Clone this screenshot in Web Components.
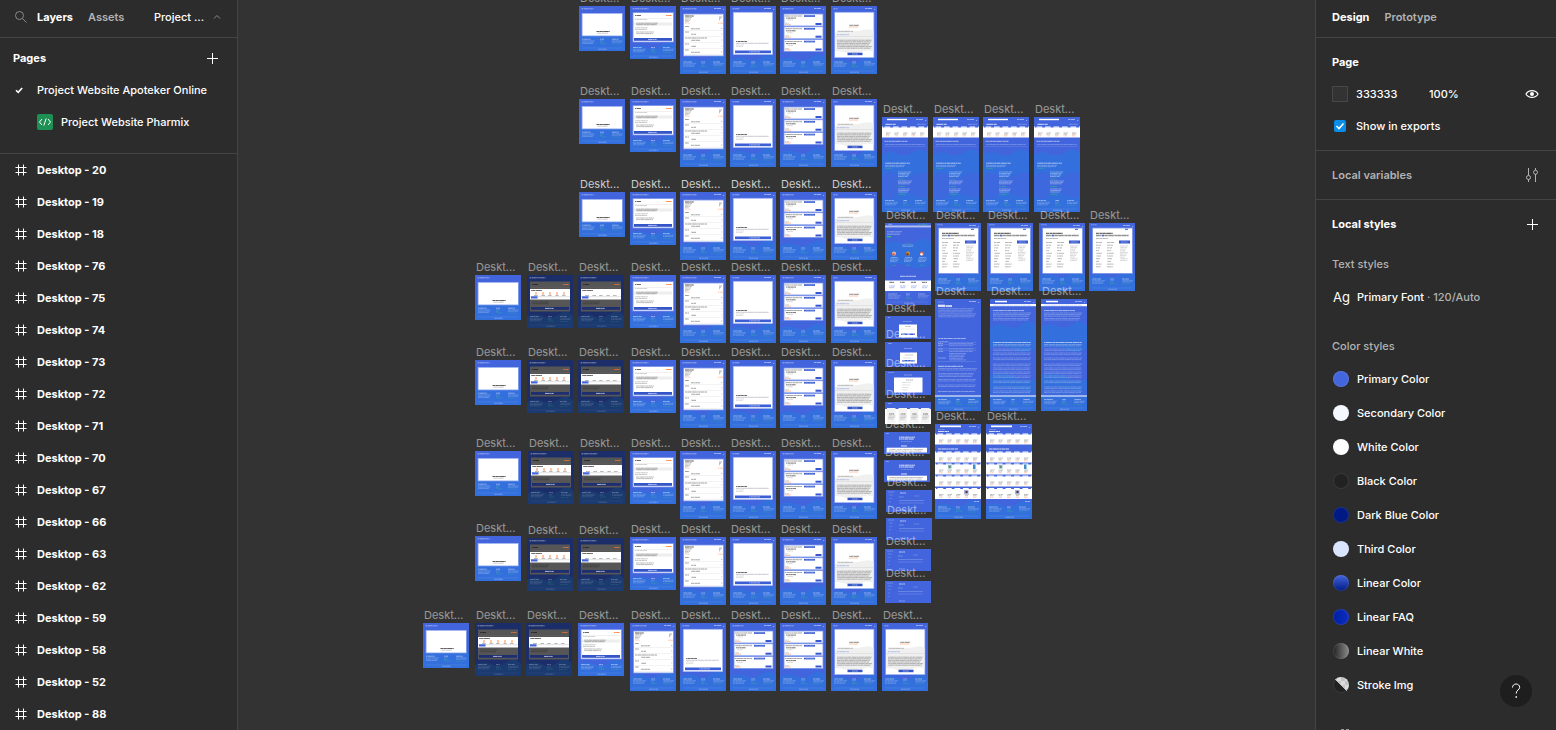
<!DOCTYPE html>
<html lang="en">
<head>
<meta charset="utf-8">
<title>Project Website Apoteker Online</title>
<style>
  html, body { margin: 0; height: 100%; background: #333; overflow: hidden; }
  body { font: 500 11px/16px Inter, "Liberation Sans", sans-serif; color: #fff; }
</style>
</head>
<body>
<design-editor></design-editor>
<script>
const BASE = `<style>
  *, ::before, ::after { box-sizing: border-box; }
  button, input { font: inherit; color: inherit; background: none; border: 0; padding: 0; margin: 0; text-align: left; }
  svg { display: block; }
  h2, h3 { font: inherit; margin: 0; }
</style>`;

const define = (name, html) => customElements.define(name, class extends HTMLElement {
  connectedCallback() {
    if (this.shadowRoot) return;
    const root = this.attachShadow({ mode: 'open' });
    root.innerHTML = BASE + (typeof html === 'function' ? html(this) : html);
  }
});

/* ---------- icons ---------- */
const ICONS = {
  search: [12, '<circle cx="4.500" cy="4.500" r="4" /><path d="M7.500 7.500l4 4"/>'],
  up: [8, '<path d="M1 5.500l3-3 3 3"/>'],
  plus: [11, '<path d="M5.500 0v11M0 5.500h11"/>'],
  tick: [8, '<path d="M1 4.200l2.200 2.200L7.200 2" stroke-width="1.600"/>'],
  frame: [12, '<path d="M3.500 .5v11M8.500 .5v11M.5 3.500h11M.5 8.500h11"/>'],
  code: [16, '<rect width="16" height="16" rx="2" fill="#1d9153" stroke="none"/><path d="M5 5L2.500 8 5 11M11 5l2.500 3L11 11M9.200 4.500L6.800 11.500"/>'],
  eye: [14, '<path d="M1 7c2.600-4.600 9.400-4.600 12 0-2.600 4.600-9.400 4.600-12 0z" stroke-width="1.200"/><circle cx="7" cy="7" r="2" fill="currentColor" stroke="none"/>'],
  sliders: [14, '<path d="M3.500 0v7.500M3.500 11.500v2.500M10.500 0v2M10.500 6v8"/><circle cx="3.500" cy="9.500" r="2"/><circle cx="10.500" cy="4.300" r="2"/>'],
  grid: [16, '<path d="M3 2.500h3M8 2.500h3M3 6h3M8 6h3" stroke-width="2"/>'],
  help: [16, '<path d="M4.500 4.500C4.500 2.500 6 1 8 1s3.700 1.400 3.700 3.300C11.700 7 8.200 6.800 8.200 10.500"/><path d="M7.500 14h1.500" stroke-width="1.500"/>']
};
define('ui-icon', el => {
  const [size, art] = ICONS[el.getAttribute('name')];
  return `<style>:host { display: block; flex: none; }</style>
  <svg width="${size}" height="${size}" viewBox="0 0 ${size} ${size}" fill="none" stroke="currentColor" aria-hidden="true">${art}</svg>`;
});

/* ---------- left panel ---------- */
define('page-item', el => `<style>
  :host { display: block; }
  button { display: flex; align-items: center; width: 100%; height: 32px; padding-left: 13px; }
  .mark { width: 24px; flex: none; }
  ui-icon[name=tick] { margin-left: 2px; }
  ui-icon[name=code] { margin-right: 8px; }
  </style>
  <button type="button"><span class="mark">${el.hasAttribute('current') ? '<ui-icon name="tick"></ui-icon>' : ''}</span>${el.hasAttribute('ready') ? '<ui-icon name="code"></ui-icon>' : ''}<slot></slot></button>`);

define('layer-item', `<style>
  :host { display: block; }
  button { display: flex; align-items: center; gap: 10px; width: 100%; height: 32px; padding-left: 15px; font-weight: 700; }
  </style><button type="button"><ui-icon name="frame"></ui-icon><span><slot></slot></span></button>`);

const LAYERS = [20, 19, 18, 76, 75, 74, 73, 72, 71, 70, 67, 66, 63, 62, 59, 58, 52, 88];
define('layers-panel', `<style>
  :host { display: block; background: #2c2c2c; border-right: 1px solid #444; overflow: hidden; }
  header { display: flex; align-items: center; height: 38px; padding: 0 16px 3px 15px; border-bottom: 1px solid #444; }
  header .search { margin-right: 10px; color: #8a8a8a; }
  header .tab { margin-right: 15px; font-weight: 700; }
  header .off { color: #b3b3b3; font-weight: 600; }
  header .menu { display: flex; align-items: center; gap: 9px; margin-left: auto; }
  header .menu ui-icon { color: #8a8a8a; }
  .pages { padding-bottom: 15px; border-bottom: 1px solid #444; }
  .title { display: flex; align-items: center; justify-content: space-between; height: 36px; padding: 4px 19px 0 13px; font-weight: 700; }
  </style>
  <header>
    <button type="button" class="search" aria-label="Search"><ui-icon name="search"></ui-icon></button>
    <button type="button" class="tab">Layers</button>
    <button type="button" class="tab off">Assets</button>
    <button type="button" class="menu">Project ...<ui-icon name="up"></ui-icon></button>
  </header>
  <section class="pages">
    <div class="title"><h2>Pages</h2><button type="button" aria-label="Add page"><ui-icon name="plus"></ui-icon></button></div>
    <page-item current>Project Website Apoteker Online</page-item>
    <page-item ready>Project Website Pharmix</page-item>
  </section>
  <nav>${LAYERS.map(n => `<layer-item>Desktop - ${n}</layer-item>`).join('')}</nav>`);

/* ---------- right panel ---------- */
define('style-item', el => `<style>
  :host { display: block; }
  button { display: flex; align-items: center; gap: 8px; height: 34px; width: 100%; padding-left: 17px; }
  i { width: 16px; height: 16px; border-radius: 50%; border: 1px solid rgba(255,255,255,.1); background: ${el.getAttribute('paint')}; background-origin: border-box; }
  </style><button type="button"><i></i><span><slot></slot></span></button>`);

const STYLES = [
  ['Primary Color', '#4466dd'],
  ['Secondary Color', '#f5f9ff'],
  ['White Color', '#fff'],
  ['Black Color', '#222'],
  ['Dark Blue Color', '#001a84'],
  ['Third Color', '#d9e4ff'],
  ['Linear Color', 'linear-gradient(#4466dd, #001a84)'],
  ['Linear FAQ', 'linear-gradient(90deg, #0020a0, #0c2cc4)'],
  ['Linear White', 'linear-gradient(90deg, #2c2c2c 10%, #8c8c8c)'],
  ['Stroke Img', 'linear-gradient(45deg, #222 49%, transparent 50%), repeating-conic-gradient(#dcdcdc 0 25%, #c4c4c4 0 50%) 0 0 / 8px 8px']
];
define('design-panel', `<style>
  :host { display: block; background: #2c2c2c; border-left: 1px solid #444; overflow: hidden; }
  header { display: flex; align-items: center; gap: 15px; height: 38px; padding: 0 16px 3px; border-bottom: 1px solid #444; font-weight: 600; }
  header .on { font-weight: 700; }
  .muted, .off { color: #b3b3b3; }
  section { border-bottom: 1px solid #444; }
  section:last-of-type { border: 0; }
  .page { padding: 8px 0; }
  .row { display: flex; align-items: center; height: 32px; padding: 0 16px; }
  .bold { font-weight: 700; }
  .chip { width: 16px; height: 16px; margin-right: 8px; background: #333; border: 1px solid #484848; }
  .hex { width: 73px; }
  .pct { width: 60px; }
  .row > button { display: flex; justify-content: center; width: 16px; margin-left: auto; }
  input[type=checkbox] { appearance: none; width: 12px; height: 12px; margin: 0 10px 0 2px; border-radius: 2px; background: #0c8ce9 center / 12px 12px no-repeat url("data:image/svg+xml,%3Csvg xmlns='http://www.w3.org/2000/svg' viewBox='0 0 12 12' fill='none' stroke='white' stroke-width='1.600'%3E%3Cpath d='M2.500 6l2.500 2.500 4.500-5'/%3E%3C/svg%3E"); }
  .tall { height: 48px; }
  .font { display: flex; align-items: center; gap: 8px; width: 100%; height: 34px; padding-left: 17px; }
  .font b { width: 16px; font: 400 13px/16px Inter, sans-serif; white-space: nowrap; }
  .colors { margin-top: 16px; }
  .more { margin: 26px 0 0 22px; }
  </style>
  <header><button type="button" class="on">Design</button><button type="button" class="off">Prototype</button></header>
  <section class="page">
    <div class="row bold"><h2>Page</h2></div>
    <div class="row"><span class="chip"></span><input class="hex" aria-label="Page colour" value="333333"><input class="pct" aria-label="Opacity" value="100%"><button type="button" aria-label="Toggle visibility"><ui-icon name="eye"></ui-icon></button></div>
    <div class="row"><input type="checkbox" id="exports" checked><label for="exports">Show in exports</label></div>
  </section>
  <section><div class="row tall muted" style="font-weight:600"><h2>Local variables</h2><button type="button" aria-label="Open variables"><ui-icon name="sliders"></ui-icon></button></div></section>
  <section>
    <div class="row tall bold"><h2>Local styles</h2><button type="button" aria-label="Add style"><ui-icon name="plus"></ui-icon></button></div>
    <div class="row muted"><h3>Text styles</h3></div>
    <button type="button" class="font"><b>Ag</b><span>Primary Font <span class="muted">· 120/Auto</span></span></button>
    <div class="row muted colors"><h3>Color styles</h3></div>
    ${STYLES.map(([n, p]) => `<style-item paint="${p}">${n}</style-item>`).join('')}
    <ui-icon class="more" name="grid"></ui-icon>
  </section>`);

/* ---------- frame thumbnails ---------- */
const rect = (x, y, w, h, fill, extra = '') => `<rect x="${x}" y="${y}" width="${w}" height="${h}" fill="${fill}" ${extra}/>`;
const line = (x, y, w, color = '#222', o = .6, t = .7) => `<path d="M${x} ${y}h${w}" stroke="${color}" stroke-opacity="${o}" stroke-width="${t}" stroke-dasharray="2.300 .3 3.400 .4 5 .2 1.300 .4" stroke-dashoffset="${(x * 7 + y * 5) % 13}" fill="none"/>`;
const lines = (x, y, w, n, gap, color, o, t) => Array.from({ length: n }, (_, i) => line(x, y + i * gap, w - (i * 5 % 4), color, o, t)).join('');
const W = '#fff', A = '#4265dd', B2 = '#3470dd', OR = '#ff7a30', GR = '#35c07a';

const back = (h, from, dark) => rect(0, 0, 46, h, dark ? '#1c2e69' : A) +
  `<path d="M0 ${from + 2}Q8 ${from - 3} 16 ${from + 1}T32 ${from - 1}T46 ${from + 1}V${h}H0z" fill="${dark ? '#1b3a70' : B2}"/>`;
const foot = (h, y, dark) => {
  const k = dark ? .6 : 1;
  return line(3, y, 9, W, .55 * k, .8) + line(21, y, 4, W, .55 * k, .8) + line(33, y, 7, W, .55 * k, .8) +
    lines(3, y + 1.7, 13, 3, 1.300, W, .32 * k) + line(21, y + 1.7, 4, W, .25 * k) + line(21, y + 3.200, 3, GR, .5 * k) + line(21, y + 4.600, 6, GR, .5 * k) +
    lines(33, y + 1.7, 11, 2, 1.300, W, .32 * k) + line(33, y + 5, 8, GR, .4 * k) +
    rect(3, h - 3.200, 40, .4, W, `opacity="${.2 * k}"`) + line(19, h - 1.800, 9, W, .45 * k, .7);
};
const head = (w = 10) => rect(2.700, 2.200, 1, 1.200, W, 'opacity=".6"') + line(4.500, 2.800, w, W, .5, .9);
const menu = () => line(34, 2.500, 7, W, .6, .8) + line(43, 3.500, 1.200, W, .5, .8);
const shade = (x, y, w, h) => rect(x - .8, y - .8, w + 1.600, h + 1.600, '#a9bbf2', 'opacity=".75"') + rect(x, y, w, h, W);

const pay = (dark, picks) => {
  let s = back(53, 40, dark) + head(14) + (dark ? rect(3, 6.500, 40, 30, '#565656') : shade(3.500, 7, 39.500, 28.500));
  s += line(5, 9.500, 6, '#111', .7, .9) + line(36, 9.500, 6, OR, dark ? .7 : .85, 1) + rect(4, 12, 38, .4, '#888', 'opacity=".3"');
  if (dark) {
    s += rect(3, 14, 40, 10.500, W) + line(4, 15.500, 11, '#111', .7, .9);
    for (let i = 0; i < 5; i++) {
      const x = 9 + i * 7;
      if (picks) s += `<circle cx="${x}" cy="17.900" r=".8" fill="${OR}" opacity=".7"/>` + rect(x - .9, 18.600, 1.800, 1.100, OR, 'opacity=".6"');
      s += line(x - 2, 20.500, 4, '#333', .5);
    }
    s += rect(3, 21.300, 40, .9, '#bbb', 'opacity=".5"') + rect(4, 21.300, 6.500, 2.200, '#4466dd') + lines(5, 27, 17, 2, 1.700, '#111', .4);
  } else {
    s += line(5, 13.500, 12, '#444', .35) + rect(4, 16.500, 38, 3, '#eee') + lines(6, 17.200, 22, 2, 1.500, '#222', .5) + lines(5, 21.800, 13, 2, 1.700, '#333', .4) + lines(6, 26, 18, 2, 1.600, '#333', .5);
  }
  return s + rect(4, 32, 38, 2.800, dark ? '#1d2f70' : '#3355c8') + line(18, 33.400, 9, W, .8, .8) + foot(53, 41.500, dark);
};

const shelf = y => rect(0, y, 46, 10, W) + [0, 1, 2, 3, 4].map(i => rect(2.500 + i * 8.500, y - 1, 5.700, 1.200, W)).join('') + rect(0, y - 1, 1, 1.200, W) + rect(45, y - 1, 1, 1.200, W) +
  [0, 1, 2, 3, 4].map(i => lines(4 + i * 8.500, y + 5.500, 4.500, 2, 1.200, '#333', .45) + line(4 + i * 8.500, y + 8.300, 3.500, OR, .6)).join('');

const KINDS = {
  done: [45, () => back(45, 28) + head() + shade(3.500, 7.800, 39.500, 21.700) + line(17, 25.500, 14, '#222', .8, .9) + line(18, 27.200, 11, '#555', .45) + foot(45, 33.200)],
  pay: [53, () => pay(false)],
  dim: [53, () => pay(true, true)],
  dimOff: [53, () => pay(true, false)],
  form: [68, () => {
    let s = back(68, 52) + head(12) + menu() + shade(4, 8.500, 39, 41);
    s += line(5, 10, 9, '#111', .8, .9) + lines(5, 11.600, 7, 4, 1.400, '#333', .45) + lines(39, 11, 3, 4, 1.400, '#333', .55) + line(38, 17.200, 5, OR, .6) + line(5, 17.200, 5, OR, .4);
    [20.500, 26, 32, 38, 44].forEach((y, i) => s += line(5, y, i === 2 ? 22 : 4, '#222', .6) + line(11, y + 2.300, i % 2 ? 5 : 9, '#222', .6) + rect(4, y + 4, 39, .4, '#999', 'opacity=".3"') + line(41, y + 2, 1.300, '#555', .5));
    return s + foot(68, 56);
  }],
  note: [68, () => back(68, 52) + head(5) + menu() + shade(3.700, 6.700, 38.500, 41.500) + line(6, 35.500, 11, '#222', .75, .9) + line(6, 37.300, 33, '#335', .4) + lines(6, 39, 8, 2, 1.500, '#777', .35) + rect(5, 44.500, 36, 2.700, '#3b5ed6') + line(19, 45.900, 11, W, .7) + foot(68, 56)],
  cards: [68, () => back(68, 52) + head(9) + menu() + [8.500, 21.200, 34].map(y => shade(4.500, y, 38, 11) + line(5, y + 1.500, 17, '#222', .6) + rect(24, y + .7, 11, 1.700, '#3558cf') + line(25, y + 1.500, 9, W, .3) + line(6, y + 3.600, 10, '#222', .7, .9) + line(7, y + 5.500, 6, '#777', .4) + line(5, y + 8.600, 4, '#555', .4) + line(5, y + 9.900, 6, OR, .8) + rect(35.500, y + 8.500, 6, 2, '#3558cf')).join('') + foot(68, 56)],
  article: [68, () => back(68, 54) + head(2) + menu() + shade(4, 6.700, 38.500, 44.500) + '<path d="M4 27Q10 24 17 25T32 24T42.500 25V46Q37 43 30 46T16 47T4 45z" fill="#f0f0f1"/>' + line(18, 19.300, 10, '#333', .65, .9) + line(18, 21, 9, OR, .7) + line(6, 25.300, 16, '#333', .45) + line(6, 28.700, 12, '#4466dd', .5) + rect(4, 30.500, 38, .4, '#ccc') + lines(6, 34.200, 35, 6, 1.600, '#333', .5) + rect(16.500, 46.700, 15, 2.500, '#3355c8') + line(21, 48, 6, W, .7) + foot(68, 56)],
  store: [95, () => back(95, 36) + '<path d="M0 60Q7 52 15 58T30 59T46 56V79Q38 83 30 77T14 79T0 78z" fill="#4265dd" opacity=".75"/>' + rect(5, 1.800, 20, 1.400, W) + menu() + line(3, 7.300, 11, W, .8, 1) + line(35, 7.300, 9, W, .4) + shelf(10.500) + line(2.500, 24.300, 23, W, .6, .9) + line(3, 27.500, 40, W, .35) + rect(2, 29.300, 42, .4, W, 'opacity=".25"') + line(3, 46.200, 25, W, .65, .9) + lines(3, 48.300, 20, 2, 1.300, W, .4) + line(3, 51.300, 7, GR, .7) + lines(16, 55, 13, 4, 1.500, W, .5) + line(16, 62, 7, GR, .6) + lines(16, 64, 14, 3, 1.400, W, .5) + line(16, 69.500, 7, GR, .7) + lines(16, 72, 12, 3, 1.500, W, .5) + line(16, 77.300, 8, GR, .7) + foot(95, 83.500)],
  home: [82, () => back(82, 19) + '<path d="M0 44Q12 38 23 43T46 42V82H0z" fill="#4265dd"/>' + rect(0, 2.500, 46, 1.900, W, 'opacity=".6"') + line(3, 1.300, 4, W, .6) + line(33, 1.300, 10, GR, .8) + lines(2, 8.500, 15, 3, 1.500, W, .4) + rect(2, 13, 4, 1.400, GR) + line(20, 20.500, 6, GR, .5) + lines(17, 22, 12, 2, 1.400, W, .4) +
    [9, 23, 37].map((x, i) => `<circle cx="${x}" cy="30.500" r="2" fill="${['#f0b8a0', '#e08a2e', '#e9603c'][i]}"/><circle cx="${x - .5}" cy="31.300" r="1.200" fill="${['#e5603d', '#72431d', W][i]}"/>` + line(x - 3, 34.500, 7, W, .5) + lines(x - 4, 36, 9, 3, 1.300, W, .4) + line(x - 2, 42.300, 4, GR, .6)).join('') +
    line(15, 53.300, 16, W, .75, .9) + rect(0, 57.500, 46, 10.500, W) + [3, 14, 25, 36].map(x => line(x + 1, 59.300, 5, '#222', .8, .9) + lines(x + 1, 63, 6, 2, 1.700, '#4466dd', .6)).join('') + foot(82, 71)],
  detail: [68, () => back(68, 52) + line(2, 1.800, 6, W, .5) + menu() + shade(4, 5.500, 39, 44.500) + rect(36, 5.800, 3, 1, '#3558cf') + line(7, 10.300, 17, '#111', .8, 1) + line(7, 12.500, 33, '#222', .5, 1.400) + rect(13, 11.800, 1.800, 1.500, '#4466dd') + line(7, 15.500, 12, '#333', .5) + lines(7, 19.500, 6, 10, 2.700, '#333', .5) + lines(18, 19.500, 7, 10, 2.700, '#333', .5) + rect(30, 17.500, 11, 3, '#3558cf') + line(32, 19, 7, W, .5) + lines(31, 23, 8, 10, 1.600, '#555', .35) + foot(68, 56)],
  story: [112, () => back(112, 78) + rect(0, 0, 46, 97, A) + menu() + line(3, 3, 6, W, .4) + rect(3, 5.700, 7, 2.200, W, 'opacity=".85"') + rect(10.500, 6.200, 6.500, 1.700, W, 'opacity=".8"') + lines(3, 9.700, 36, 3, 1.600, W, .38) + lines(3, 14.800, 38, 3, 1.500, W, .35) + line(3, 39.500, 28, W, .55, .9) + line(3, 42.500, 10, W, .4) + [43.500, 45.700, 49, 51.500].map(y => rect(3, y, 38, .3, W, 'opacity=".4"') + line(3, y + 1, 5, W, .5) + line(14, y + 1, 24, W, .35)).join('') + lines(14, 54.500, 17, 5, 1.600, W, .4) + line(3, 59, 8, W, .5) + rect(3, 62.500, 38, .3, W, 'opacity=".4"') + line(3, 67.300, 25, W, .7, .9) + lines(3, 69.500, 39, 2, 1.500, W, .35) + lines(3, 74.500, 36, 3, 1.500, W, .35) + lines(3, 80.500, 38, 2, 1.500, W, .35) + lines(3, 86, 38, 2, 1.500, W, .35) + line(3, 92.500, 37, W, .5) + rect(0, 96, 46, 2, W, 'opacity=".5"') + foot(112, 100.500)],
  long: [112, () => back(112, 26) + '<path d="M0 50Q10 44 22 50T46 50V80Q36 84 25 78T0 76z" fill="#4265dd"/><path d="M0 90Q12 86 25 90T46 90V97H0z" fill="#4265dd" opacity=".6"/>' + rect(5, 1.800, 12, 1.500, W) + menu() + rect(0, 5, 46, 2.200, W) + line(3, 6.100, 38, '#4466dd', .4) + line(3, 11.600, 31, W, .6, .9) + lines(3, 14, 38, 3, 1.600, W, .4) + lines(3, 19.500, 36, 2, 1.500, W, .35) + line(3, 43.500, 38, W, .65, .9) + lines(3, 45.500, 38, 2, 1.400, W, .4) + [50, 54, 59, 65, 69, 73, 77, 82, 88, 92].map(y => lines(3, y, 38, 2, 1.600, W, .36)).join('') + rect(0, 96, 46, 2, W, 'opacity=".5"') + foot(112, 100.500)],
  shop: [95, () => back(95, 80) + rect(5, 1.500, 21, 1.700, W) + menu() + line(3, 5.500, 7, W, .4) + line(3, 7.500, 11, W, .8, 1) + shelf(10.500) + line(3, 25, 20, W, .8, 1.200) + shelf(28.500) + shelf(40.500) + shelf(52.500) + shelf(65) + rect(13, 41, 3.500, 3.500, '#8dbab0') + rect(14, 42, 1.500, 2, '#4d8e82') + rect(38, 40.500, 2.500, 4.500, '#3f8fc9') + rect(29, 66, 4.500, 4, '#a9b3d5') + rect(30.500, 67, 2, 2, '#522d46') + line(39, 77.500, 5, W, .7) + foot(95, 83)],
  login: [23, () => rect(0, 0, 46, 23, A) + line(3, 1.500, 2, W, .5) + line(18, 5.500, 9, W, .4) + rect(14, 8.500, 18, 13, W) + line(20, 10.500, 6, '#555', .5) + rect(16, 12.500, 14, 1, '#eee') + rect(16, 17.500, 14, 1.500, '#3558cf')],
  signin: [25, () => rect(0, 0, 46, 25, A) + line(3, 1.500, 4, W, .5) + line(19, 6.500, 8, W, .5) + rect(15, 10.500, 17, 11, W) + line(20, 13, 8, '#555', .5) + line(18, 16, 8, '#999', .5) + rect(17, 18, 13, 1.500, '#3558cf')],
  signup: [24, () => rect(0, 0, 46, 24, A) + line(3, 1.500, 6, W, .4) + line(19, 4, 8, W, .5) + rect(9, 6.500, 28.500, 15, W) + line(21, 9, 7, '#555', .6) + lines(17, 11.500, 9, 4, 2.500, '#999', .45)],
  tiles: [22, () => rect(0, 0, 46, 22, A) + line(3, 1.500, 4, W, .5) + rect(0, 7, 46, 15, W) + [2, 13.500, 25, 36].map(x => rect(x, 6, 8.500, 15, '#f3f3f3') + line(x + 2, 12, 5, '#222', .8) + lines(x + 1.300, 14, 7, 3, 1.500, '#555', .4)).join('')],
  faq: [22, () => rect(0, 0, 46, 22, A) + line(2, 1.500, 3, W, .5) + lines(15, 5.200, 16, 2, 1.800, W, .8, 1) + line(17, 9.500, 11, W, .3) + rect(17, 13.500, 6, 1, W, 'opacity=".8"') + rect(3, 15.700, 40, 4.800, W) + lines(5, 17.500, 34, 2, 1.600, '#333', .45)],
  profile: [22, () => rect(0, 0, 46, 22, A) + line(2, 2, 6, W, .4) + lines(3, 5, 4, 4, 3.500, W, .25) + line(14, 3, 6, W, .7, .9) + line(13, 7, 5, W, .4) + line(28, 6, 5, W, .3) + rect(13, 10, 25, .8, W, 'opacity=".25"') + rect(13, 12.700, 25, .6, W, 'opacity=".25"') + line(14, 20, 6, W, .5)]
};

define('frame-node', el => {
  const [h, art] = KINDS[el.getAttribute('kind')];
  return `<style>
  :host { position: absolute; width: 46px; }
  span { position: absolute; left: 1px; bottom: 100%; white-space: nowrap; font: 400 11px/16px Inter, sans-serif; color: ${el.hasAttribute('lit') ? '#ccc' : 'rgba(255,255,255,.5)'}; }
  </style><span><slot></slot></span><svg width="46" height="${h}" viewBox="0 0 46 ${h}" aria-hidden="true">${art()}</svg>`;
});

/* ---------- canvas: [kind, x, y] in canvas coordinates ---------- */
const NODES = [];
const MAIN = [['done', 341], ['pay', 392], ['form', 442], ['note', 492], ['cards', 542], ['article', 593]];
[6, 99, 192].forEach(y => MAIN.forEach(([k, x]) => NODES.push([k, x, y, y === 192])));
[[275, 275, 289, 340], [360, 360, 289, 340], [451, 451, 290, 341], [536, 538, 289, 340]].forEach(([y, yd, a, b]) => {
  NODES.push(['done', 237, y], ['dim', a, yd], ['dimOff', b, yd]);
  MAIN.slice(1).forEach(([k, x]) => NODES.push([k, x, y === 536 ? 537 : y]));
});
NODES.push(['done', 185, 623], ['dim', 237, 623], ['dimOff', 288, 623], ['pay', 340, 623], ['form', 392, 623], ['note', 442, 623],
  ['cards', 492, 623], ['cards', 542, 623], ['article', 593, 623], ['article', 644, 623],
  ['store', 644, 117], ['store', 695, 117], ['store', 745, 117], ['store', 796, 117],
  ['home', 647, 223], ['detail', 697, 223], ['detail', 749, 223], ['detail', 801, 223], ['detail', 851, 223],
  ['story', 697, 299], ['long', 752, 299], ['long', 803, 299], ['shop', 697, 424], ['shop', 748, 424],
  ['login', 647, 316], ['signin', 647, 342], ['signup', 647, 371], ['tiles', 647, 402], ['faq', 646, 432], ['faq', 646, 460],
  ['profile', 648, 490], ['profile', 648, 518], ['profile', 647, 549], ['profile', 647, 581]);

define('design-canvas', `<style>:host { display: block; position: relative; overflow: hidden; background: #333; }</style>` +
  NODES.map(([k, x, y, lit]) => `<frame-node kind="${k}" ${lit ? 'lit' : ''} style="left:${x}px;top:${y}px">Deskt...</frame-node>`).join(''));

define('help-button', `<style>
  :host { position: absolute; right: 24px; bottom: 23px; }
  button { display: grid; place-items: center; width: 32px; height: 32px; border-radius: 50%; background: #1e1e1e; }
  </style><button type="button" aria-label="Help"><ui-icon name="help"></ui-icon></button>`);

define('design-editor', `<style>
  :host { display: grid; grid-template-columns: 238px minmax(0, 1fr) 241px; grid-template-rows: minmax(0, 1fr); height: 100vh; position: relative; overflow: hidden; }
  </style><layers-panel></layers-panel><design-canvas></design-canvas><design-panel></design-panel><help-button></help-button>`);
</script>
</body>
</html>
